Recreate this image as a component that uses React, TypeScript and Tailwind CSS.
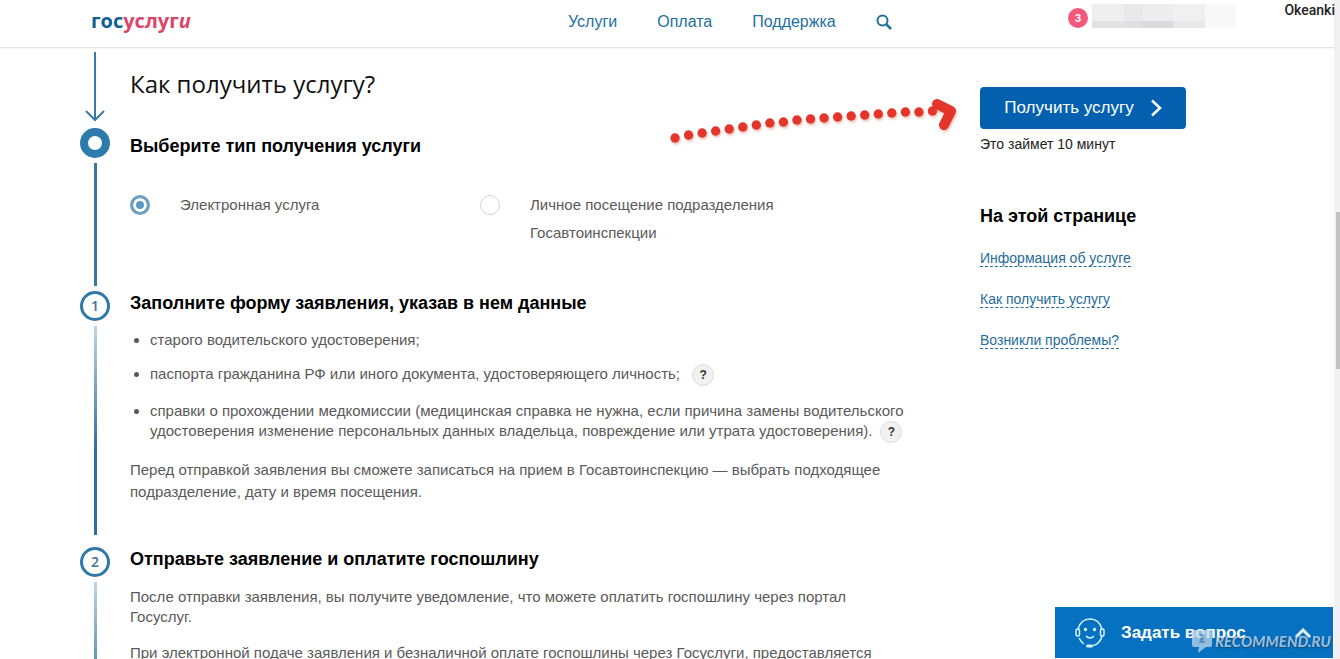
import type { ReactNode } from "react";

const NAV = ["Услуги", "Оплата", "Поддержка"];
const PAGE_LINKS = ["Информация об услуге", "Как получить услугу", "Возникли проблемы?"];
const DOT_HEIGHTS = [59, 56, 54, 52, 50, 48, 46, 44, 43, 41, 40, 39, 38, 37, 36, 35, 34, 33, 33, 32];

interface StepProps {
  marker: ReactNode;
  line: string;
  children: ReactNode;
}

function Step({ marker, line, children }: StepProps) {
  return (
    <li className="flex gap-5">
      <div className="flex w-[30px] shrink-0 flex-col items-center">
        {marker}
        <div className={`mt-[5px] w-[3px] flex-1 ${line}`} />
      </div>
      <div className="min-w-0 flex-1">{children}</div>
    </li>
  );
}

function StepNumber({ value }: { value: number }) {
  return (
    <span className="flex size-[30px] items-center justify-center rounded-full border-[3px] border-[#2d7aa9] font-['Open_Sans'] text-sm font-semibold text-[#3c6f91]">
      {value}
    </span>
  );
}

function StepTitle({ children }: { children: ReactNode }) {
  return <h3 className="text-lg leading-6 font-bold text-black">{children}</h3>;
}

function Hint() {
  return (
    <button
      type="button"
      className="ml-2 inline-flex size-[22px] items-center justify-center rounded-full border border-[#dcdcdc] bg-[#f1f1f1] align-middle text-xs leading-4 font-bold text-[#333]"
    >
      ?
    </button>
  );
}

interface OptionProps {
  id: string;
  label: string;
  checked?: boolean;
}

function Option({ id, label, checked }: OptionProps) {
  return (
    <div className="flex w-[350px] gap-[30px]">
      <input
        id={id}
        type="radio"
        name="way"
        defaultChecked={checked}
        className="mt-1 size-5 shrink-0 appearance-none rounded-full border border-[#d5d5d5] bg-white checked:border-[3px] checked:border-[#6d9fc0] checked:bg-[#5b9ac4] checked:shadow-[inset_0_0_0_3px_white]"
      />
      <label htmlFor={id} className="leading-7">
        {label}
      </label>
    </div>
  );
}

/* Hidden user name, shown as pale blocks */
function MaskedName() {
  return (
    <div className="grid h-6 w-36 grid-cols-[32px_18px_31px_32px_31px] grid-rows-[17px_7px]">
      <span className="bg-[#efefef]" />
      <span className="bg-[#e9e9ea]" />
      <span className="bg-[#ededee]" />
      <span className="bg-[#f0f0f1]" />
      <span className="bg-[#f8f8f8]" />
      <span className="bg-[#e2e2e5]" />
      <span className="bg-[#e0e0e4]" />
      <span className="bg-[#dadadf]" />
      <span className="bg-[#e8e8ea]" />
      <span className="bg-[#f8f8f9]" />
    </div>
  );
}

function Header() {
  return (
    <header className="relative border-b border-[#e3e3e3] shadow-[0_1px_2px_rgba(0,0,0,0.05)]">
      <div className="flex h-[47px] px-20">
        <a
          href="#"
          className="w-[488px] shrink-0 pl-[11px] pt-[7px] font-['Open_Sans'] text-xl leading-7 font-bold"
        >
          <span className="text-[#0f6192]">гос</span>
          <span className="text-[#dd4568]">
            услуг<i>и</i>
          </span>
        </a>
        <nav className="flex h-[43px] items-center gap-10 text-base text-[#1d6f9f]">
          {NAV.map((item) => (
            <a key={item} href="#">
              {item}
            </a>
          ))}
          <button type="button" aria-label="Поиск">
            <svg width="16" height="16" viewBox="0 0 16 16" fill="none" stroke="#1f719f" strokeWidth="2">
              <circle cx="6.5" cy="6.5" r="5" />
              <path d="M10.2 10.2 15 15" strokeWidth="2.6" />
            </svg>
          </button>
        </nav>
        <div className="ml-auto mr-[18px] flex items-start gap-1 pt-1">
          <span className="mt-1 flex size-5 items-center justify-center rounded-full bg-[#f4587a] text-[11px] font-bold text-white">
            3
          </span>
          <MaskedName />
        </div>
      </div>
      <span className="absolute top-0 -right-px font-[Roboto] text-sm leading-5 font-medium text-[#222]">
        Okeanki
      </span>
    </header>
  );
}

function DottedArrow() {
  return (
    <svg
      className="absolute top-0 right-full mr-4 -mt-2 drop-shadow-[1px_2px_1px_rgba(200,80,40,0.35)]"
      width="300"
      height="70"
      viewBox="0 0 300 70"
      fill="#e4352b"
    >
      {DOT_HEIGHTS.map((y, i) => (
        <circle key={i} cx={11 + i * 13.55} cy={y} r="4.7" />
      ))}
      <path
        d="M273 25 287 32 280 46"
        fill="none"
        stroke="#e4352b"
        strokeWidth="10"
        strokeLinecap="round"
        strokeLinejoin="round"
      />
    </svg>
  );
}

function Sidebar() {
  return (
    <aside className="relative mt-[39px] w-[206px] shrink-0">
      <DottedArrow />
      <button
        type="button"
        className="flex h-[42px] w-full items-center justify-center gap-4 rounded bg-[#0560b0] text-[17px] text-white"
      >
        Получить услугу
        <svg width="12" height="18" viewBox="0 0 12 18" fill="none" stroke="white" strokeWidth="2.5">
          <path d="M2 1.5 10 9 2 16.5" />
        </svg>
      </button>
      <p className="mt-[5px] text-sm text-[#222]">Это займет 10 минут</p>
      <h2 className="mt-[50px] text-lg leading-6 font-bold text-black">На этой странице</h2>
      <ul className="mt-5 space-y-[21px] text-sm text-[#1f6b9c]">
        {PAGE_LINKS.map((link) => (
          <li key={link} className="leading-5">
            <a href="#" className="border-b border-dashed border-[#1f6b9c]">
              {link}
            </a>
          </li>
        ))}
      </ul>
    </aside>
  );
}

function Watermark() {
  return (
    <div className="absolute right-0.5 bottom-1 flex items-center gap-0.5 opacity-75">
      <svg width="22" height="26" viewBox="0 0 22 26">
        <path
          d="M3 2h16q2 0 2 2v13q0 2-2 2h-4l-8 6 1-6H3q-2 0-2-2V4q0-2 2-2Z"
          fill="#c3d7e8"
        />
        <path d="M9 6h5l-2 7h2v2H8l2-7H8Z" fill="#6f9bc0" />
      </svg>
      <span className="font-[Lato] text-[15px] font-black text-[#c3d7e8] italic [text-shadow:0_1px_2px_#234]">
        RECOMMEND.RU
      </span>
    </div>
  );
}

function AskWidget() {
  return (
    <div className="fixed right-[7px] bottom-px w-[278px]">
      <button
        type="button"
        className="flex h-[51px] w-full items-center bg-[#0671c1] pl-5 text-[17px] font-bold text-white"
      >
        <svg width="30" height="30" viewBox="0 0 30 30" fill="none" stroke="#d8f4ff" strokeWidth="1.5">
          <path d="M3 11C5 4 10 1 15 1s10 3 12 10" />
          <rect x="1" y="11" width="3.5" height="7" rx="1.5" />
          <rect x="25.5" y="11" width="3.5" height="7" rx="1.5" />
          <path d="M27 18c-1 5-5 9-9 9.5M4 20q2 4 5 6" />
          <path d="M12.500 28h4" strokeWidth="3" strokeLinecap="round" />
          <path d="M11 18q4 4 8 0" />
          <circle cx="10.5" cy="11.5" r="1" fill="#d8f4ff" />
          <circle cx="19.5" cy="11.5" r="1" fill="#d8f4ff" />
        </svg>
        <span className="ml-4">Задать вопрос</span>
        <svg className="mr-[21px] ml-auto" width="18" height="10" viewBox="0 0 18 10" fill="none" stroke="#e4eef6" strokeWidth="3">
          <path d="M2 9 9 2l7 7" />
        </svg>
      </button>
      <Watermark />
    </div>
  );
}

export default function App() {
  return (
    <div className="flex h-screen overflow-hidden bg-white font-['Liberation_Sans',sans-serif] text-[15px] text-[#5a5a5a]">
      <div className="min-w-0 flex-1">
        <Header />
        <div className="flex justify-between px-20">
          <main className="w-[830px]">
            <div className="flex h-20 gap-5">
              <svg className="mt-1 shrink-0" width="30" height="70" viewBox="0 0 30 70" fill="none" stroke="#3a7ba5" strokeWidth="2">
                <path d="M15 0v67M6 59l9 9 9-9" />
              </svg>
              <h2 className="pt-4 font-['Open_Sans'] text-2xl leading-10 text-[#111]">Как получить услугу?</h2>
            </div>

            <ol>
              <Step
                marker={<span className="size-[30px] rounded-full border-8 border-[#2d7aad]" />}
                line="mb-[5px] bg-[#38789f]"
              >
                <div className="pt-1.5 pb-11">
                  <StepTitle>Выберите тип получения услуги</StepTitle>
                  <div className="mt-[33px] flex">
                    <Option id="online" label="Электронная услуга" checked />
                    <Option id="visit" label="Личное посещение подразделения Госавтоинспекции" />
                  </div>
                </div>
              </Step>

              <Step marker={<StepNumber value={1} />} line="mb-3 bg-linear-to-b from-[#c3d5e1] to-[#2b6f9b] to-60%">
                <div className="pb-11">
                  <StepTitle>Заполните форму заявления, указав в нем данные</StepTitle>
                  <ul className="mt-[15px] list-disc space-y-[14px] pl-5 leading-5">
                    <li>старого водительского удостоверения;</li>
                    <li className="pb-px">
                      паспорта гражданина РФ или иного документа, удостоверяющего личность; <Hint />
                    </li>
                    <li>
                      справки о прохождении медкомиссии (медицинская справка не нужна, если причина замены
                      водительского удостоверения изменение персональных данных владельца, повреждение или
                      утрата удостоверения).
                      <Hint />
                    </li>
                  </ul>
                  <p className="mt-4 leading-[22px]">
                    Перед отправкой заявления вы сможете записаться на прием в Госавтоинспекцию — выбрать
                    подходящее подразделение, дату и время посещения.
                  </p>
                </div>
              </Step>

              <Step marker={<StepNumber value={2} />} line="bg-linear-to-b from-[#c3d5e1] to-[#5f93b5]">
                <StepTitle>Отправьте заявление и оплатите госпошлину</StepTitle>
                <div className="mt-4 space-y-4 leading-5">
                  <p>
                    После отправки заявления, вы получите уведомление, что можете оплатить госпошлину через
                    портал Госуслуг.
                  </p>
                  <p>При электронной подаче заявления и безналичной оплате госпошлины через Госуслуги, предоставляется</p>
                </div>
              </Step>
            </ol>
          </main>
          <div className="pr-[68px]">
            <Sidebar />
          </div>
        </div>
      </div>

      {/* Scroll track */}
      <div className="w-1.5 shrink-0 bg-[#f1f1f1] pt-[212px]">
        <div className="ml-0.5 h-[157px] bg-[#c1c1c1]" />
      </div>

      <AskWidget />
    </div>
  );
}
